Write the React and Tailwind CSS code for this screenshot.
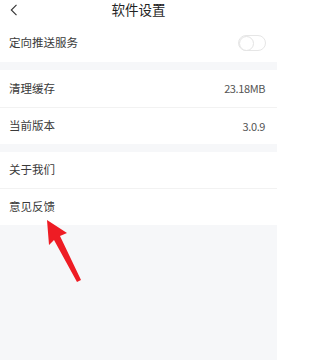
import React from 'react';

const rowText = 'text-[11.5px] text-[#3a3a3a]';

function Row({ label, value, children, className = '' }) {
  return (
    <div className={`flex items-center justify-between bg-white pl-[9px] pr-[12px] ${className}`}>
      <span className={rowText}>{label}</span>
      {value && <span className="text-[11px] tracking-[-0.4px] text-[#555]">{value}</span>}
      {children}
    </div>
  );
}

function Toggle() {
  return (
    <div className="mr-[-1px] flex h-[16px] w-[28px] items-center rounded-full border border-[#e6e6e6] bg-white">
      <div className="h-[15px] w-[15px] rounded-full border border-[#e3e3e3] bg-white" />
    </div>
  );
}

export default function App() {
  return (
    <div
      className="relative h-[360px] w-[277px] overflow-hidden bg-[#f6f7f9]"
      style={{ fontFamily: '"Noto Sans CJK SC", "Noto Sans", sans-serif' }}
    >
      {/* header */}
      <div className="relative flex h-[24px] items-start justify-center bg-white">
        <svg className="absolute left-[10px] top-[4px]" width="8" height="12" viewBox="0 0 8 12" fill="none">
          <path d="M6.5 0.8 L1.3 6 L6.5 11.2" stroke="#333" strokeWidth="1.1" />
        </svg>
        <span className="text-[13.5px] leading-[18px] text-[#222]">软件设置</span>
      </div>

      <Row label="定向推送服务" className="h-[38px]">
        <Toggle />
      </Row>

      <div className="h-[8px]" />

      <Row label="清理缓存" value="23.18MB" className="h-[37px]" />
      <div className="h-px bg-[#f2f2f2]" />
      <Row label="当前版本" value="3.0.9" className="h-[36px]" />

      <div className="h-[8px]" />

      <Row label="关于我们" className="h-[36px]" />
      <div className="h-px bg-[#f2f2f2]" />
      <Row label="意见反馈" className="h-[36px]" />

      {/* red pointer arrow */}
      <svg className="absolute left-0 top-0" width="277" height="360" viewBox="0 0 277 360">
        <polygon
          points="47,220 49,245 54,240 77,282 81,280 60,236 67,233"
          fill="#ee1c24"
        />
      </svg>
    </div>
  );
}
